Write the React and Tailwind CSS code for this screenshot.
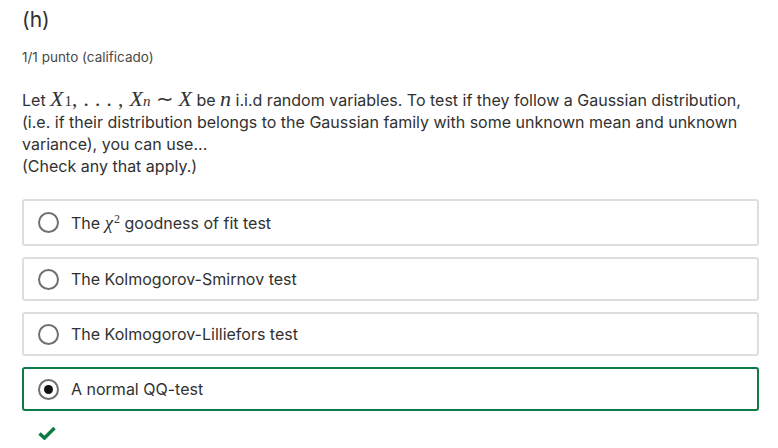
import React from 'react';

const serif = { fontFamily: '"Liberation Serif", serif' };

const Option = ({ children, selected, tall }) => {
  return (
    <label
      className={
        'flex items-center gap-[12px] pl-[14px] pr-4 rounded-[3px] border-2 ' +
        (tall ? 'h-[47px] ' : 'h-[44px] ') +
        (selected ? 'border-[#0e7a46]' : 'border-[#dedede]')
      }
    >
      <span className="flex items-center justify-center w-[21px] h-[21px] rounded-full border-2 border-[#6f6f6f] shrink-0">
        {selected && <span className="block w-[9px] h-[9px] rounded-full bg-[#111]" />}
      </span>
      <span className="text-[16px] leading-none text-[#313131]">{children}</span>
    </label>
  );
};

const M = ({ children }) => (
  <span className="italic text-[22px] leading-none" style={serif}>
    {children}
  </span>
);

const App = () => {
  return (
    <div className="bg-white w-[778px] h-[448px] px-[22px] pt-[5px] text-[#313131]" style={{ fontFamily: 'Inter, sans-serif' }}>
      <h3 className="text-[21px] leading-[30px]">(h)</h3>
      <div className="text-[13.5px] leading-[18px] text-[#4a4a4a] mt-[13px]">1/1 punto (calificado)</div>

      <div className="text-[16px] leading-[22px] mt-[22px]">
        <p>
          Let <M>X</M>
          <span className="text-[15px] leading-none ml-[1px]" style={serif}>1</span>
          <span className="text-[21px] leading-none tracking-[0.5px]" style={serif}>, . . . , </span>
          <M>X</M>
          <span className="italic text-[15px] leading-none" style={serif}>n</span>
          <span className="text-[21px] leading-none mx-[5px]" style={serif}>∼</span>
          <M>X</M> be <M>n</M> i.i.d random variables. To test if they follow a Gaussian distribution,
          <br />
          (i.e. if their distribution belongs to the Gaussian family with some unknown mean and unknown
          <br />
          variance), you can use...
        </p>
        <p>(Check any that apply.)</p>
      </div>

      <div className="flex flex-col gap-[11px] mt-[22px] w-[737px]">
        <Option tall>
          The{' '}
          <span className="italic text-[19px]" style={serif}>χ</span>
          <sup className="text-[12px] ml-[1px]" style={serif}>2</sup> goodness of fit test
        </Option>
        <Option>The Kolmogorov-Smirnov test</Option>
        <Option>The Kolmogorov-Lilliefors test</Option>
        <Option selected>A normal QQ-test</Option>
      </div>

      <svg className="mt-[15px] ml-[16px]" width="18" height="14" viewBox="0 0 18 14">
        <path d="M1.5 7.5 L6.5 12 L16.5 2" fill="none" stroke="#0e7a46" strokeWidth="3.5" />
      </svg>
    </div>
  );
};

export default App;
